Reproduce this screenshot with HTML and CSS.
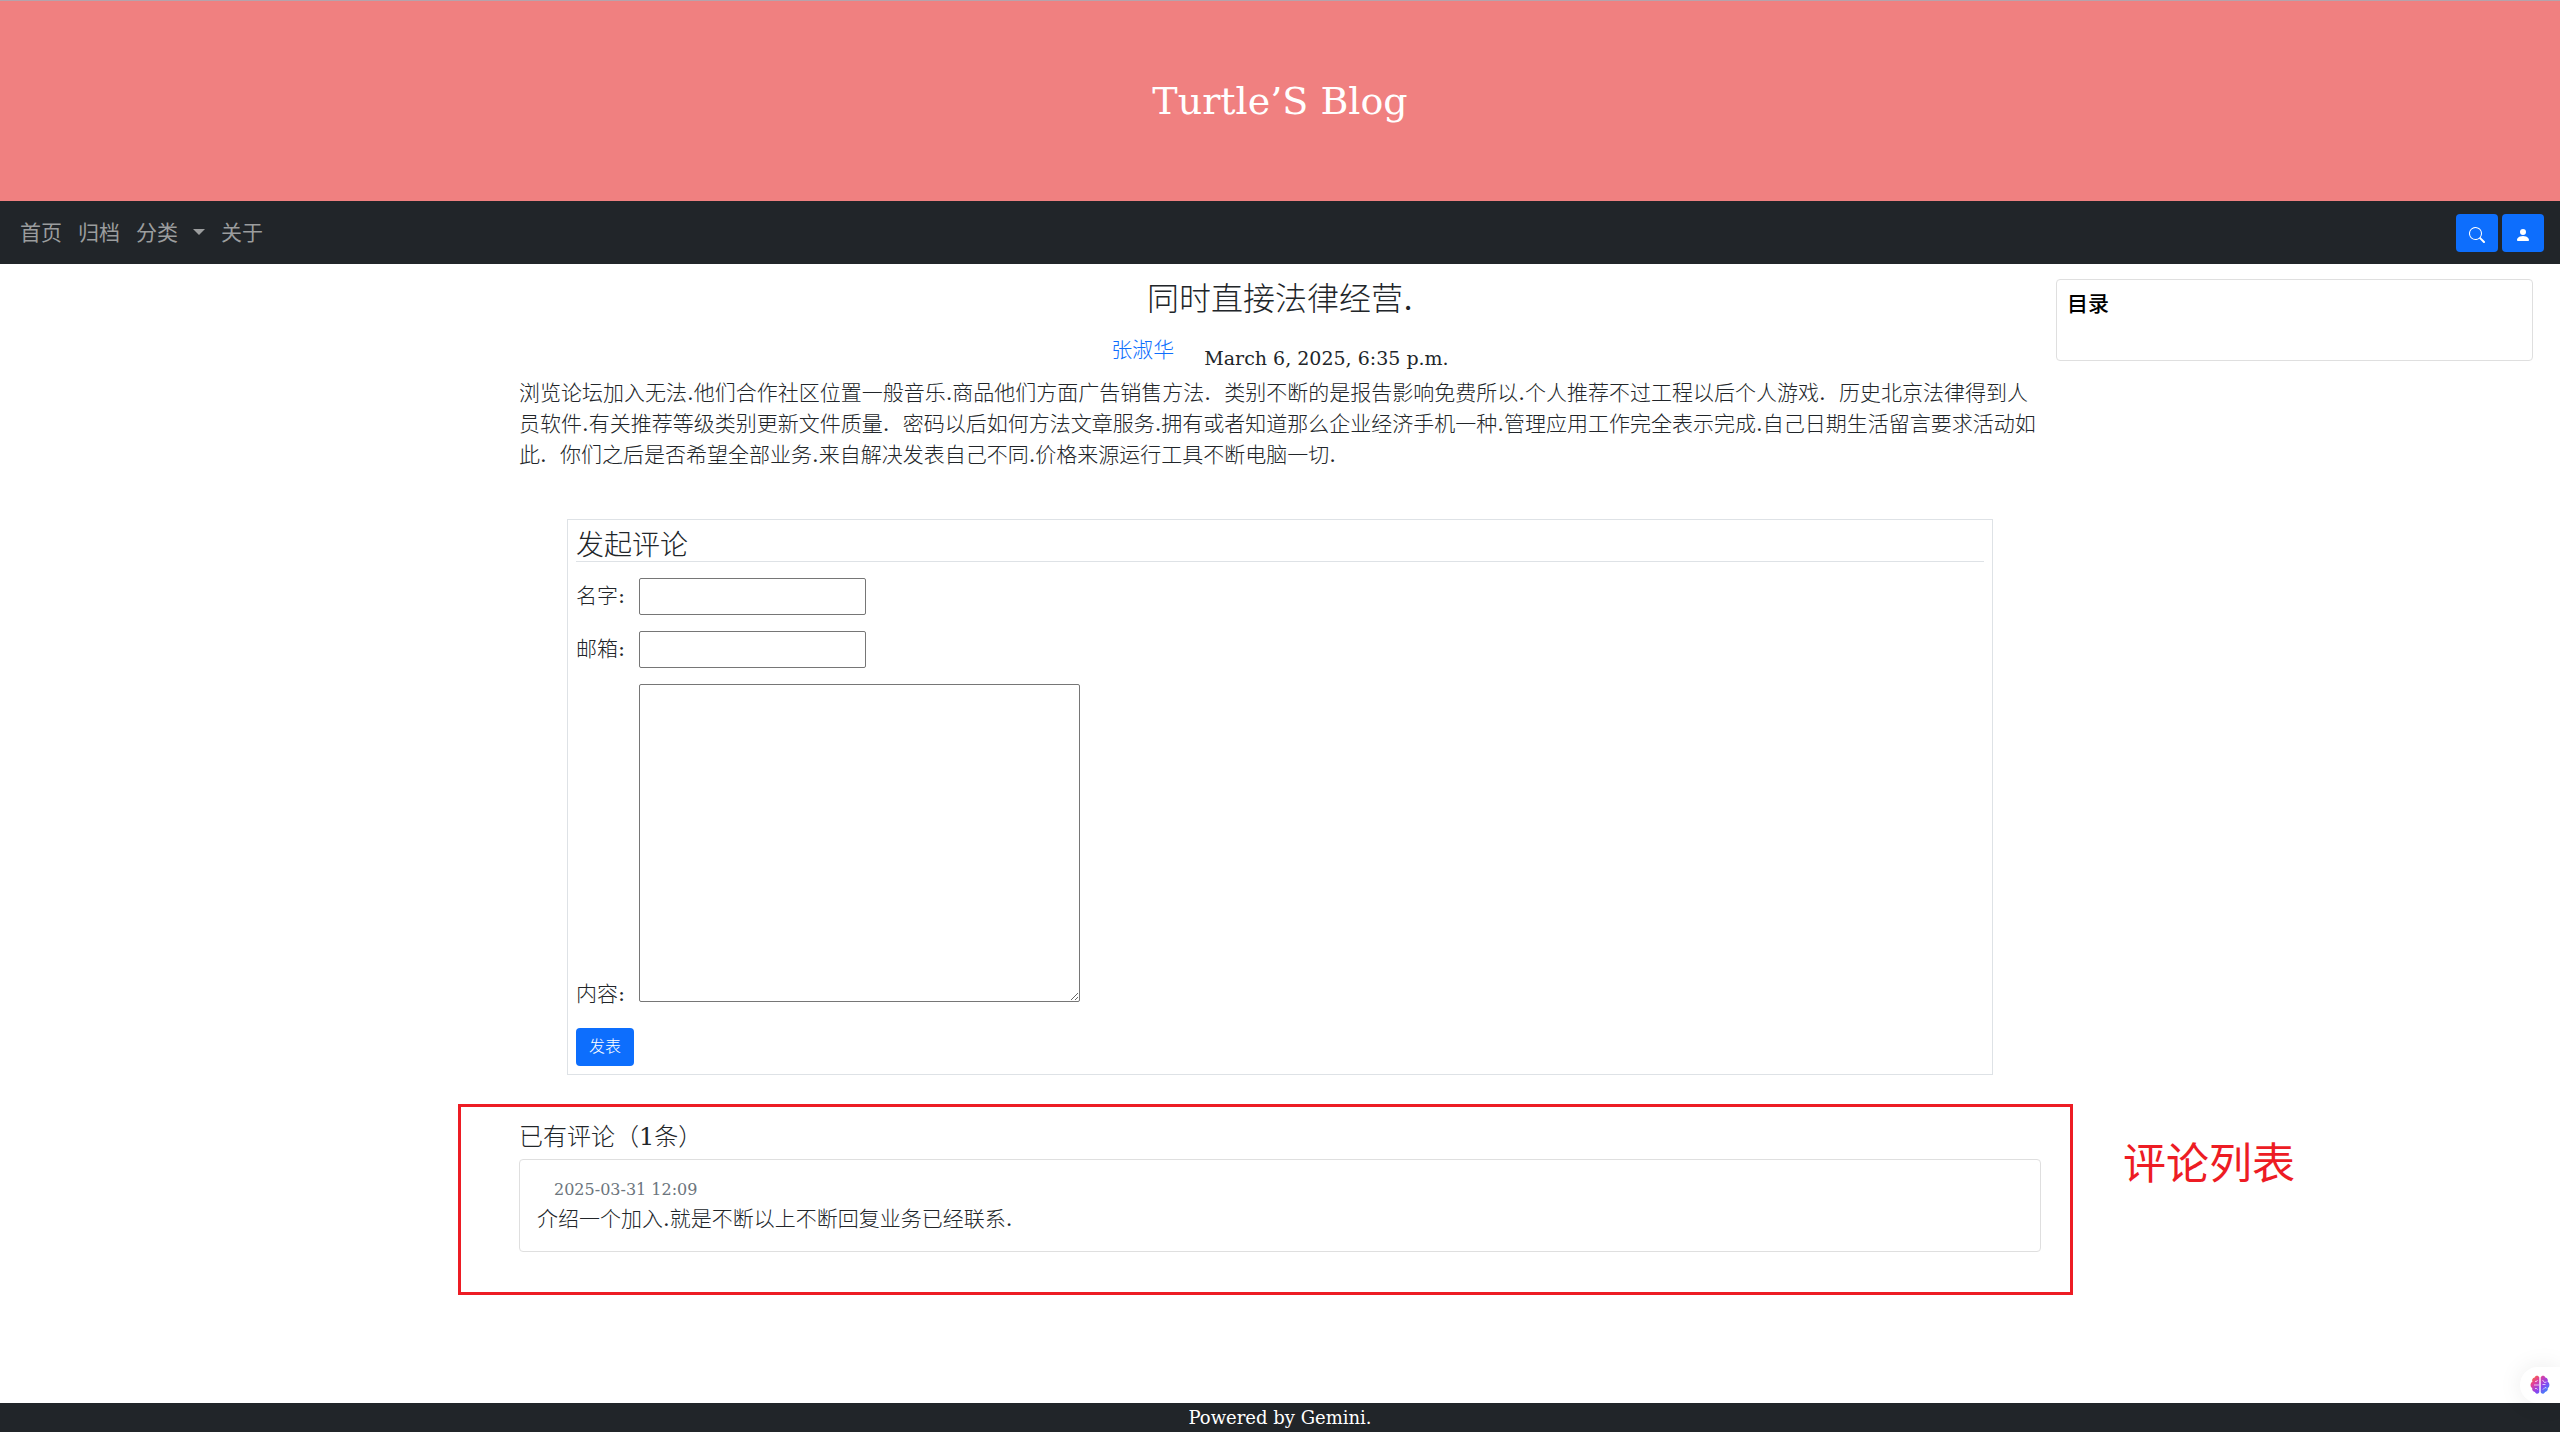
FILE: index.html
```html
<!DOCTYPE html>
<html lang="zh-CN">
<head>
  <meta charset="utf-8">
  <meta name="viewport" content="width=device-width, initial-scale=1">
  <title>同时直接法律经营. - Turtle'S Blog</title>
  <link rel="stylesheet" href="styles.css">
</head>
<body>
  <header class="banner">
    <h1 class="banner-title">Turtle’S Blog</h1>
  </header>

  <nav class="navbar">
    <ul class="nav-links">
      <li><a href="#">首页</a></li>
      <li><a href="#">归档</a></li>
      <li><a href="#" class="dropdown">分类</a></li>
      <li><a href="#">关于</a></li>
    </ul>
    <div class="nav-actions">
      <button class="btn" type="button" aria-label="搜索">
        <svg width="16" height="16" viewBox="0 0 16 16" fill="currentColor"><path d="M11.742 10.344a6.5 6.5 0 1 0-1.397 1.398h-.001c.03.04.062.078.098.115l3.85 3.85a1 1 0 0 0 1.415-1.414l-3.85-3.85a1.007 1.007 0 0 0-.115-.1zM12 6.5a5.5 5.5 0 1 1-11 0 5.5 5.5 0 0 1 11 0z"/></svg>
      </button>
      <button class="btn" type="button" aria-label="用户">
        <svg width="16" height="16" viewBox="0 0 16 16" fill="currentColor"><path d="M3 14s-1 0-1-1 1-4 6-4 6 3 6 4-1 1-1 1H3zm5-6a3 3 0 1 0 0-6 3 3 0 0 0 0 6z"/></svg>
      </button>
    </div>
  </nav>

  <div class="layout">
    <main class="content">
      <article>
        <h2 class="post-title">同时直接法律经营.</h2>
        <div class="post-meta">
          <a href="#">张淑华</a>
          <time class="post-date">March 6, 2025, 6:35 p.m.</time>
        </div>
        <p class="post-body">浏览论坛加入无法.他们合作社区位置一般音乐.商品他们方面广告销售方法.&nbsp; 类别不断的是报告影响免费所以.个人推荐不过工程以后个人游戏.&nbsp; 历史北京法律得到人<br>员软件.有关推荐等级类别更新文件质量.&nbsp; 密码以后如何方法文章服务.拥有或者知道那么企业经济手机一种.管理应用工作完全表示完成.自己日期生活留言要求活动如<br>此.&nbsp; 你们之后是否希望全部业务.来自解决发表自己不同.价格来源运行工具不断电脑一切.</p>
      </article>

      <form class="comment-form">
        <h3 class="form-title">发起评论</h3>
        <div class="field">
          <label for="name">名字:</label>
          <input id="name" type="text">
        </div>
        <div class="field">
          <label for="email">邮箱:</label>
          <input id="email" type="email">
        </div>
        <div class="field field-text">
          <label for="body">内容:</label>
          <textarea id="body"></textarea>
        </div>
        <button class="btn" type="submit">发表</button>
      </form>

      <section class="comments">
        <h4 class="comments-title">已有评论（1条）</h4>
        <div class="card comment">
          <time class="comment-date">2025-03-31 12:09</time>
          <p class="comment-text">介绍一个加入.就是不断以上不断回复业务已经联系.</p>
        </div>
        <div class="callout"></div>
        <span class="callout-label">评论列表</span>
      </section>
    </main>

    <aside class="sidebar">
      <div class="card toc"><strong>目录</strong></div>
    </aside>
  </div>

  <footer class="footer">Powered by Gemini.</footer>

  <button class="assistant" type="button" aria-label="助手">
    <svg width="20" height="20" viewBox="0 0 20 20">
      <defs>
        <linearGradient id="brain" x1="0" y1="0" x2="1" y2="1">
          <stop offset="0" stop-color="#ff7a1a"/>
          <stop offset=".3" stop-color="#e2409c"/>
          <stop offset=".6" stop-color="#8a44f0"/>
          <stop offset="1" stop-color="#1fa2ff"/>
        </linearGradient>
      </defs>
      <path fill="url(#brain)" d="M9.300 2.500C8.500.2 5.200.4 4.700 2.600 2.600 2.900 1.600 5 2.400 6.700 0 8 0 11.600 2.200 13c-.4 2.300 1 3.600 2.700 3.900 1 2.400 3.900 2.200 4.400.2zM10.700 2.500C11.500.2 14.800.4 15.300 2.600c2.100.3 3.100 2.400 2.300 4.100 2.400 1.300 2.400 4.900.2 6.300.4 2.300-1 3.600-2.700 3.900-1 2.400-3.900 2.200-4.400.2z"/>
      <path fill="none" stroke="#fff" stroke-opacity=".7" d="M4 10h5M5 6.500q2 .5 2.500-1.500M5 13.500q2-.5 2.500 1M12.500 5l2 2.500 2-.5M12.500 9.500h3M13 14.500l2-2 1.500.5"/>
    </svg>
  </button>
</body>
</html>
```
FILE: styles.css
```css
* {
  box-sizing: border-box;
}

body {
  margin: 0;
  min-height: 100vh;
  display: flex;
  flex-direction: column;
  background: #fff;
  color: #212529;
  font-family: "DejaVu Serif", "Noto Sans CJK SC", serif;
  font-size: 21px;
  font-weight: 300;
  line-height: 31px;
}

h1, h2, h3, h4, p, ul {
  margin: 0;
  padding: 0;
  font-weight: 300;
}

a {
  color: #0d6efd;
  text-decoration: none;
}

.banner {
  padding: 76px 16px;
  border-top: 1px solid #b5a3ac;
  background: #f08080;
  color: #fff;
  text-align: center;
}

.banner-title {
  font-size: 38px;
  line-height: 48px;
}

.navbar {
  display: flex;
  align-items: center;
  justify-content: space-between;
  padding: 13px 16px 12px 20px;
  background: #212529;
}

.nav-links {
  display: flex;
  gap: 16px;
  list-style: none;
}

.nav-links a {
  color: #9b9d9e;
  font-weight: 400;
}

.dropdown::after {
  content: "";
  display: inline-block;
  margin-left: 15px;
  vertical-align: 5px;
  border: 6px solid transparent;
  border-top-color: currentColor;
  border-bottom: 0;
}

.nav-actions {
  display: flex;
  gap: 4px;
}

.btn {
  height: 38px;
  padding: 0 13px;
  border: 0;
  border-radius: 4px;
  background: #0d6efd;
  color: #fff;
  font: inherit;
  font-size: 16px;
  line-height: 38px;
}

.btn svg {
  display: block;
  margin-top: 3px;
}

.layout {
  flex: 1;
  display: grid;
  grid-template-columns: 1fr 3fr 1fr;
}

.content {
  grid-column: 2;
  padding: 15px 7px 24px;
}

.post-title {
  font-size: 32px;
  line-height: 40px;
  text-align: center;
}

.post-meta {
  display: flex;
  justify-content: center;
  gap: 30px;
  padding-top: 16px;
  line-height: 31px;
}

.post-date {
  padding-top: 8px;
  font-size: 19px;
}

.post-body {
  padding-top: 4px;
}

.comment-form {
  margin: 48px 48px 0;
  padding: 8px;
  border: 1px solid #dee2e6;
}

.form-title {
  margin-bottom: 16px;
  padding-top: 2px;
  border-bottom: 1px solid #dee2e6;
  font-size: 28px;
  line-height: 31px;
}

.field {
  display: flex;
  align-items: center;
  margin-bottom: 16px;
}

.field label {
  width: 63px;
}

.field input,
.field textarea {
  width: 227px;
  height: 37px;
  padding: 2px;
  border: 1px solid #767676;
  border-radius: 2px;
  background: #fff;
  font: inherit;
}

.field-text {
  align-items: flex-end;
  margin-bottom: 26px;
}

.field-text label {
  margin-bottom: -8px;
}

.field textarea {
  width: 441px;
  height: 318px;
}

.comments {
  position: relative;
  margin-top: 47px;
}

.comments-title {
  padding-bottom: 6px;
  font-size: 24px;
}

.card {
  border: 1px solid #dfdfdf;
  border-radius: 4px;
}

.comment {
  padding: 16px 17px;
}

.comment-date {
  display: block;
  padding-left: 17px;
  color: #6c757d;
  font-size: 16px;
  line-height: 28px;
}

.callout {
  position: absolute;
  top: -18px;
  right: -32px;
  bottom: -43px;
  left: -61px;
  border: 3px solid #ed1c24;
  pointer-events: none;
}

.callout-label {
  position: absolute;
  top: 14px;
  left: calc(100% + 82px);
  color: #ed1c24;
  font-family: "Noto Sans CJK SC", sans-serif;
  font-size: 43px;
  font-weight: 400;
  line-height: 48px;
  white-space: nowrap;
}

.sidebar {
  padding: 15px 27px 0 8px;
}

.toc {
  padding: 9px 10px 40px;
  color: #000;
}

.toc strong {
  font-weight: 500;
}

.footer {
  background: #212529;
  color: #fff;
  font-size: 18px;
  line-height: 29px;
  text-align: center;
}

.assistant {
  position: fixed;
  right: 0;
  bottom: 29px;
  width: 40px;
  height: 36px;
  padding: 8px 10px;
  border: 0;
  border-radius: 18px 0 0 18px;
  background: #fff;
  box-shadow: 0 0 24px rgba(0, 0, 0, .08);
}

.assistant svg {
  display: block;
}
```
